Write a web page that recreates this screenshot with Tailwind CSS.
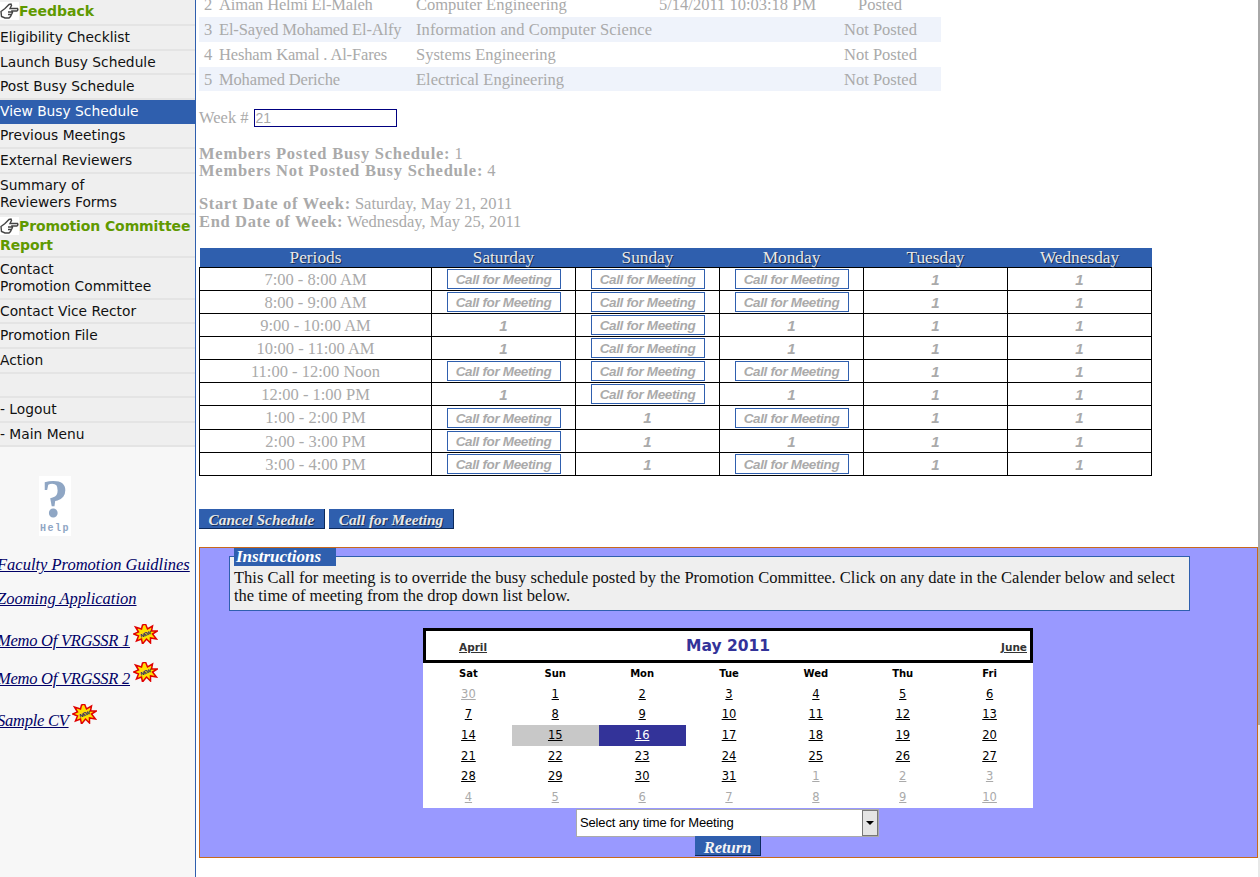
<!DOCTYPE html>
<html lang="en">
<head>
    <meta charset="UTF-8">
    <title>View Busy Schedule</title>
    <script src="https://cdn.jsdelivr.net/npm/@tailwindcss/browser@4"></script>
</head>
<body class="bg-white">
<div class="flex h-[877px] w-[1260px] overflow-hidden font-['Liberation_Serif',serif]">

    <!-- left menu -->
    <aside class="w-[196px] shrink-0 bg-[#f7f7f7] border-r border-[#2f5fae] overflow-hidden">
        <div class="font-['DejaVu_Sans',sans-serif] text-[13.800px] leading-[17px] text-[#111] [&>div]:bg-[#efefef] [&>div]:border-b-2 [&>div]:border-[#e4e4e4] [&>div]:py-[3px]">
            <div class="h-[26px] flex items-center font-bold text-[#5f9900] text-[14px] !pb-[5px]">
                <svg class="w-[19px] h-[18px] shrink-0 bg-white" viewBox="0 0 19 17" fill="#fff" stroke="#444" stroke-width="1.400"><path d="M1 9 5 6 9 2 11 1.500 11.500 3 10 6H17.500Q18.500 7.500 17 8.500H12L12.500 10 11.500 12 10.500 14 9 15.500H5L1.500 14ZM8 9.500H12M8 12H11.500"/></svg>Feedback
            </div>
            <div class="h-[25px]">Eligibility Checklist</div>
            <div class="h-[24px]">Launch Busy Schedule</div>
            <div class="h-[25px]">Post Busy Schedule</div>
            <div class="h-[24px] !bg-[#2f5fae] text-white !border-[#2f5fae]">View Busy Schedule</div>
            <div class="h-[25px]">Previous Meetings</div>
            <div class="h-[25px]">External Reviewers</div>
            <div class="h-[41px]">Summary of<br>Reviewers Forms</div>
            <div class="h-[43px] font-bold text-[#5f9900] text-[14px] tracking-[-0.100px] leading-[19px] !pt-[2px] whitespace-nowrap">
                <svg class="inline w-[19px] h-[18px] -mt-[2px] bg-white" viewBox="0 0 19 17" fill="#fff" stroke="#444" stroke-width="1.400"><path d="M1 9 5 6 9 2 11 1.500 11.500 3 10 6H17.500Q18.500 7.500 17 8.500H12L12.500 10 11.500 12 10.500 14 9 15.500H5L1.500 14ZM8 9.500H12M8 12H11.500"/></svg>Promotion Committee<br>Report
            </div>
            <div class="h-[42px]">Contact<br>Promotion Committee</div>
            <div class="h-[24px]">Contact Vice Rector</div>
            <div class="h-[25px]">Promotion File</div>
            <div class="h-[25px]">Action</div>
            <div class="h-[24px]"></div>
            <div class="h-[25px]">- Logout</div>
            <div class="h-[24px]">- Main Menu</div>
        </div>

        <div class="ml-[39px] mt-[29px] w-[32px] h-[60px] bg-white flex flex-col items-center text-[#8fa6c4]">
            <span class="text-[54px] leading-[46px] font-bold">?</span>
            <span class="font-['Liberation_Mono',monospace] text-[10px] leading-[13px] font-bold tracking-[1.500px]">Help</span>
        </div>

        <div class="mt-[19px] -ml-[3px] whitespace-nowrap text-[#000066] italic text-[16.500px] leading-[20px] [&_a]:underline">
            <div><a href="#">Faculty Promotion Guidlines</a></div>
            <div class="mt-[14px]"><a href="#">Zooming Application</a></div>
            <div class="mt-[15px] flex items-end gap-[3px] tracking-[-0.250px]"><a href="#">Memo Of VRGSSR 1</a>
                <svg class="w-[25px] h-[20px] mb-[7px]" viewBox="0 0 24 20"><polygon points="12,0 14,5 19,2 18,7 24,7 19,10 23,15 17,14 17,19 13,15 9,20 8,15 3,17 5,12 0,10 5,8 2,3 8,5 9,1" fill="#ffe000" stroke="#e00000" stroke-width="1.500"/><text x="12" y="12" text-anchor="middle" font-size="5" font-weight="bold" font-family="Liberation Sans" fill="#000080" transform="rotate(-20 12 10)">NEW</text></svg>
            </div>
            <div class="mt-[11px] flex items-end gap-[3px] tracking-[-0.250px]"><a href="#">Memo Of VRGSSR 2</a>
                <svg class="w-[25px] h-[20px] mb-[7px]" viewBox="0 0 24 20"><polygon points="12,0 14,5 19,2 18,7 24,7 19,10 23,15 17,14 17,19 13,15 9,20 8,15 3,17 5,12 0,10 5,8 2,3 8,5 9,1" fill="#ffe000" stroke="#e00000" stroke-width="1.500"/><text x="12" y="12" text-anchor="middle" font-size="5" font-weight="bold" font-family="Liberation Sans" fill="#000080" transform="rotate(-20 12 10)">NEW</text></svg>
            </div>
            <div class="mt-[15px] flex items-end gap-[3px] tracking-[-0.250px]"><a href="#">Sample CV</a>
                <svg class="w-[25px] h-[20px] mb-[7px]" viewBox="0 0 24 20"><polygon points="12,0 14,5 19,2 18,7 24,7 19,10 23,15 17,14 17,19 13,15 9,20 8,15 3,17 5,12 0,10 5,8 2,3 8,5 9,1" fill="#ffe000" stroke="#e00000" stroke-width="1.500"/><text x="12" y="12" text-anchor="middle" font-size="5" font-weight="bold" font-family="Liberation Sans" fill="#000080" transform="rotate(-20 12 10)">NEW</text></svg>
            </div>
        </div>
    </aside>

    <!-- main content, scrolled so the first rows are cut off -->
    <main class="w-[1062px] shrink-0 pl-[3px] text-[#aaa] text-[16.500px]">
        <table class="-mt-[8px] w-[742px] table-fixed border-collapse leading-[22px] [&_td]:p-0 [&_td]:pt-[1px] [&_td]:whitespace-nowrap">
            <colgroup><col class="w-[20px]"><col class="w-[197px]"><col class="w-[243px]"><col class="w-[185px]"><col></colgroup>
            <tr class="h-[25px]"><td class="pl-[5px]!">2</td><td class="tracking-[-0.150px]">Aiman Helmi El-Maleh</td><td>Computer Engineering</td><td>5/14/2011 10:03:18 PM</td><td class="pl-[14px]!">Posted</td></tr>
            <tr class="h-[25px] bg-[#eff3fb]"><td class="pl-[5px]!">3</td><td class="tracking-[-0.150px]">El-Sayed Mohamed El-Alfy</td><td class="tracking-[0.120px]">Information and Computer Science</td><td></td><td>Not Posted</td></tr>
            <tr class="h-[25px]"><td class="pl-[5px]!">4</td><td class="tracking-[-0.150px]">Hesham Kamal . Al-Fares</td><td>Systems Engineering</td><td></td><td>Not Posted</td></tr>
            <tr class="h-[24px] bg-[#eff3fb]"><td class="pl-[5px]!">5</td><td class="tracking-[-0.150px]">Mohamed Deriche</td><td>Electrical Engineering</td><td></td><td>Not Posted</td></tr>
        </table>

        <div class="mt-[18px] flex items-center h-[18px]">
            <span>Week #</span>
            <input type="text" value="21" class="ml-[5px] w-[143px] h-[18px] border border-[#000080] px-[1px] font-['Liberation_Sans',sans-serif] text-[14px] text-[#aaa]">
        </div>

        <div class="mt-[18px] leading-[17px] [&_b]:tracking-[0.750px]"><b>Members Posted Busy Schedule:</b> 1<br><b>Members Not Posted Busy Schedule:</b> 4</div>
        <div class="mt-[16px] leading-[18px] [&_b]:tracking-[0.650px]"><b>Start Date of Week:</b> Saturday, May 21, 2011<br><b>End Date of Week:</b> Wednesday, May 25, 2011</div>

        <table class="mt-[17px] w-[953px] table-fixed border-collapse text-center leading-[19px] [&_td]:border [&_td]:border-black [&_td]:h-[23px] [&_td]:p-0 [&_button]:block [&_button]:mx-auto [&_button]:w-[114px] [&_button]:h-[20px] [&_button]:pb-[2px] [&_button]:border [&_button]:border-[#2f5fae] [&_button]:font-['Liberation_Sans',sans-serif] [&_button]:italic [&_button]:font-bold [&_button]:text-[13.500px] [&_button]:tracking-[-0.350px] [&_button]:text-[#aaa] [&_i]:font-['Liberation_Sans',sans-serif] [&_i]:font-bold [&_i]:text-[15px]">
            <colgroup><col class="w-[232px]"><col class="w-[144px]"><col class="w-[144px]"><col class="w-[144px]"><col class="w-[144px]"><col class="w-[144px]"></colgroup>
            <tr class="bg-[#2f5fae] text-[#e8e8e8] h-[19px] text-[17.300px] [text-shadow:1px_1px_0_#1a2f55]">
                <th class="font-normal">Periods</th><th class="font-normal">Saturday</th><th class="font-normal">Sunday</th><th class="font-normal">Monday</th><th class="font-normal">Tuesday</th><th class="font-normal">Wednesday</th>
            </tr>
            <tr><td>7:00 - 8:00 AM</td><td><button>Call for Meeting</button></td><td><button>Call for Meeting</button></td><td><button>Call for Meeting</button></td><td><i>1</i></td><td><i>1</i></td></tr>
            <tr><td>8:00 - 9:00 AM</td><td><button>Call for Meeting</button></td><td><button>Call for Meeting</button></td><td><button>Call for Meeting</button></td><td><i>1</i></td><td><i>1</i></td></tr>
            <tr><td>9:00 - 10:00 AM</td><td><i>1</i></td><td><button>Call for Meeting</button></td><td><i>1</i></td><td><i>1</i></td><td><i>1</i></td></tr>
            <tr><td>10:00 - 11:00 AM</td><td><i>1</i></td><td><button>Call for Meeting</button></td><td><i>1</i></td><td><i>1</i></td><td><i>1</i></td></tr>
            <tr><td>11:00 - 12:00 Noon</td><td><button>Call for Meeting</button></td><td><button>Call for Meeting</button></td><td><button>Call for Meeting</button></td><td><i>1</i></td><td><i>1</i></td></tr>
            <tr><td>12:00 - 1:00 PM</td><td><i>1</i></td><td><button>Call for Meeting</button></td><td><i>1</i></td><td><i>1</i></td><td><i>1</i></td></tr>
            <tr class="h-[24px]"><td>1:00 - 2:00 PM</td><td><button>Call for Meeting</button></td><td><i>1</i></td><td><button>Call for Meeting</button></td><td><i>1</i></td><td><i>1</i></td></tr>
            <tr><td>2:00 - 3:00 PM</td><td><button>Call for Meeting</button></td><td><i>1</i></td><td><i>1</i></td><td><i>1</i></td><td><i>1</i></td></tr>
            <tr><td>3:00 - 4:00 PM</td><td><button>Call for Meeting</button></td><td><i>1</i></td><td><button>Call for Meeting</button></td><td><i>1</i></td><td><i>1</i></td></tr>
        </table>

        <div class="mt-[33px] flex gap-[4px] text-[15.300px] [&_button]:h-[20px] [&_button]:bg-[#2f5fae] [&_button]:border-r [&_button]:border-b [&_button]:border-[#0c2a5c] [&_button]:italic [&_button]:font-bold [&_button]:text-[#e8e8e8] [&_button]:[text-shadow:1px_1px_0_#1a2f55]">
            <button class="w-[126px]">Cancel Schedule</button>
            <button class="w-[125px]">Call for Meeting</button>
        </div>

        <div class="mt-[18px] w-[1059px] h-[311px] bg-[#9999ff] border border-[#c8691c] relative flex flex-col">
            <!-- instructions box, legend sits on its top edge -->
            <div class="ml-[29px] mt-[8px] w-[961px] h-[55px] bg-[#efefef] border border-[#2f5fae] px-[4px] pt-[12px] text-[#111] leading-[18px] relative">
                <span class="absolute left-[4px] -top-[9px] w-[102px] h-[18px] pl-[2px] bg-[#2f5fae] text-white font-bold italic leading-[18px] text-[17px]">Instructions</span>
                This Call for meeting is to override the busy schedule posted by the Promotion Committee. Click on any date in the Calender below and select the time of meeting from the drop down list below.
            </div>

            <div class="ml-[223px] mt-[17px] w-[610px] bg-white font-['DejaVu_Sans',sans-serif] text-[11.500px] text-black">
                <div class="h-[35px] border-[3px] border-black grid grid-cols-[60px_1fr_60px] items-center">
                    <a href="#" class="ml-[33px] mt-[5px] text-[10.500px] font-bold underline text-[#333]">April</a>
                    <span class="text-center pt-[3px] text-[15.500px] font-bold text-[#333399]">May 2011</span>
                    <a href="#" class="text-right mr-[3px] mt-[5px] text-[10.500px] font-bold underline text-[#333]">June</a>
                </div>
                <div class="grid grid-cols-7 pl-[2px] text-center auto-rows-[20.700px] items-center [&_a]:underline [&>*]:h-full [&>*]:leading-[21px] [&_.o]:text-[#aaa]">
                    <b class="text-[10px]">Sat</b><b class="text-[10px]">Sun</b><b class="text-[10px]">Mon</b><b class="text-[10px]">Tue</b><b class="text-[10px]">Wed</b><b class="text-[10px]">Thu</b><b class="text-[10px]">Fri</b>
                    <div><a href="#" class="o">30</a></div><div><a href="#">1</a></div><div><a href="#">2</a></div><div><a href="#">3</a></div><div><a href="#">4</a></div><div><a href="#">5</a></div><div><a href="#">6</a></div>
                    <div><a href="#">7</a></div><div><a href="#">8</a></div><div><a href="#">9</a></div><div><a href="#">10</a></div><div><a href="#">11</a></div><div><a href="#">12</a></div><div><a href="#">13</a></div>
                    <div><a href="#">14</a></div><div class="bg-[#c8c8c8]"><a href="#">15</a></div><div class="bg-[#333399] text-white"><a href="#">16</a></div><div><a href="#">17</a></div><div><a href="#">18</a></div><div><a href="#">19</a></div><div><a href="#">20</a></div>
                    <div><a href="#">21</a></div><div><a href="#">22</a></div><div><a href="#">23</a></div><div><a href="#">24</a></div><div><a href="#">25</a></div><div><a href="#">26</a></div><div><a href="#">27</a></div>
                    <div><a href="#">28</a></div><div><a href="#">29</a></div><div><a href="#">30</a></div><div><a href="#">31</a></div><div><a href="#" class="o">1</a></div><div><a href="#" class="o">2</a></div><div><a href="#" class="o">3</a></div>
                    <div><a href="#" class="o">4</a></div><div><a href="#" class="o">5</a></div><div><a href="#" class="o">6</a></div><div><a href="#" class="o">7</a></div><div><a href="#" class="o">8</a></div><div><a href="#" class="o">9</a></div><div><a href="#" class="o">10</a></div>
                </div>
            </div>

            <div class="ml-[376px] mt-[1px] w-[303px] h-[28px] bg-white border border-[#aaa] flex items-center font-['Liberation_Sans',sans-serif] text-[13px] tracking-[-0.150px] text-black pl-[3px]">
                <span class="flex-1">Select any time for Meeting</span>
                <span class="w-[16px] h-[26px] border border-[#777] bg-[#e4e4e4] flex items-center justify-center">
                    <svg class="w-[8px] h-[4px]" viewBox="0 0 8 4"><polygon points="0,0 8,0 4,4" fill="#000"/></svg>
                </span>
            </div>
            <button class="ml-[495px] -mt-[1px] w-[66px] h-[20px] bg-[#2f5fae] border-r border-b border-[#0c2a5c] text-[#f4f4f4] font-bold italic">Return</button>
        </div>
    </main>

    <!-- remains of the browser scrollbar -->
    <div class="w-[2px] shrink-0 flex flex-col">
        <div class="h-[725px] bg-[#a8a8a8]"></div>
        <div class="flex-1 bg-[#e8e8e8]"></div>
    </div>
</div>
</body>
</html>
